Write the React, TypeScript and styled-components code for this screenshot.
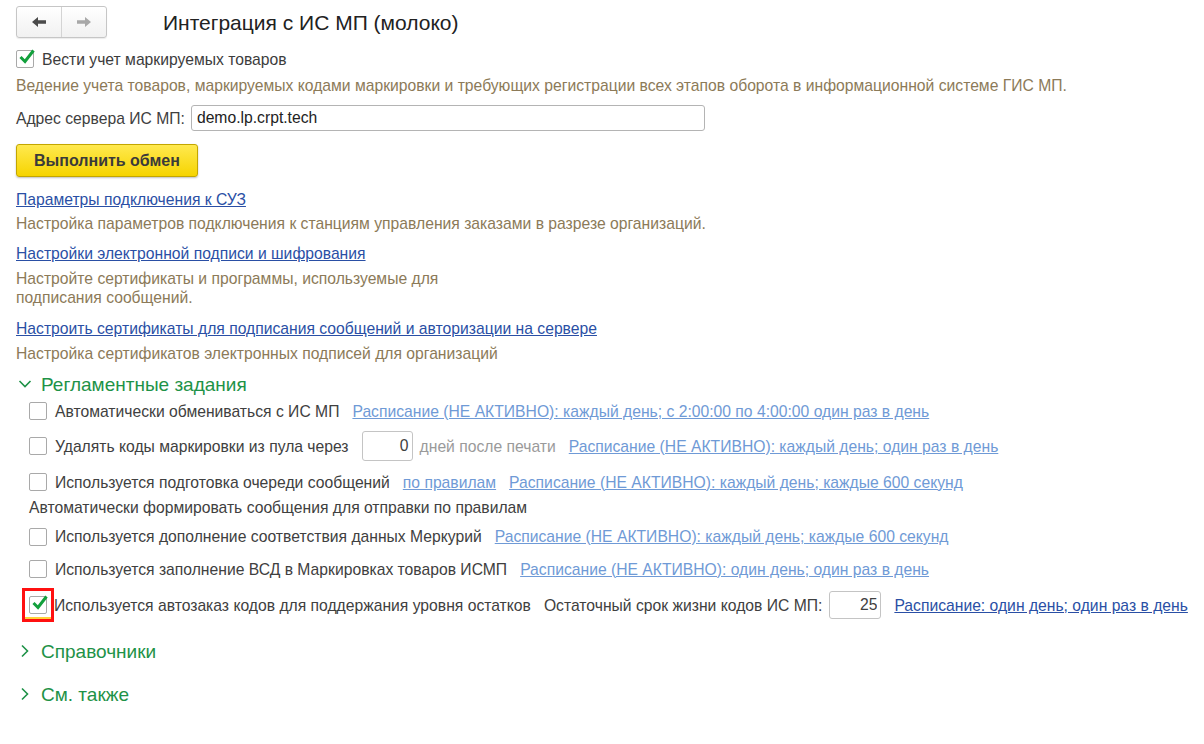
import React from "react";
import styled, { createGlobalStyle } from "styled-components";

const GlobalStyle = createGlobalStyle`
    html, body {
        margin: 0;
        padding: 0;
        background: #ffffff;
    }
    body {
        font-family: "Liberation Sans", Arial, sans-serif;
        font-size: 15.7px;
        color: #404040;
    }
`;

function BackArrow({ color }: { color: string }) {
    return (
        <svg width="16" height="12" viewBox="0 0 16 12">
            <path d="M1 6 L7 1 L7 4.2 L15 4.2 L15 7.8 L7 7.8 L7 11 Z" fill={color} />
        </svg>
    );
}

function ForwardArrow({ color }: { color: string }) {
    return (
        <svg width="16" height="12" viewBox="0 0 16 12">
            <path d="M15 6 L9 1 L9 4.2 L1 4.2 L1 7.8 L9 7.8 L9 11 Z" fill={color} />
        </svg>
    );
}

function Chevron({ open }: { open?: boolean }) {
    return (
        <svg width="14" height="14" viewBox="0 0 14 14">
            {open ? (
                <polyline points="1.5,4 7,9.5 12.5,4" fill="none" stroke="#1e9247" strokeWidth="1.6" />
            ) : (
                <polyline points="4,1.5 9.5,7 4,12.5" fill="none" stroke="#1e9247" strokeWidth="1.6" />
            )}
        </svg>
    );
}

function Check({ checked }: { checked?: boolean }) {
    return (
        <CheckBox>
            {checked && (
                <svg width="20" height="18" viewBox="0 0 20 18" style={{ position: "absolute", left: 0, top: -3 }}>
                    <polyline points="3.5,9 8,13.5 16.5,2.5" fill="none" stroke="#12a03c" strokeWidth="3" />
                </svg>
            )}
        </CheckBox>
    );
}

function App() {
    return (
        <Page>
            <GlobalStyle />
            <Header>
                <NavGroup>
                    <NavBtn><BackArrow color="#4a4a4a" /></NavBtn>
                    <NavBtn $last><ForwardArrow color="#a8a8a8" /></NavBtn>
                </NavGroup>
                <Title>Интеграция с ИС МП (молоко)</Title>
            </Header>

            <CheckRow>
                <Check checked />
                <span>Вести учет маркируемых товаров</span>
            </CheckRow>
            <Note $top={7}>
                Ведение учета товаров, маркируемых кодами маркировки и требующих регистрации всех этапов оборота в информационной системе ГИС МП.
            </Note>

            <FieldRow>
                <span>Адрес сервера ИС МП:</span>
                <TextInput defaultValue="demo.lp.crpt.tech" />
            </FieldRow>

            <YellowBtn>Выполнить обмен</YellowBtn>

            <Link $top={13}>Параметры подключения к СУЗ</Link>
            <Note $top={5}>Настройка параметров подключения к станциям управления заказами в разрезе организаций.</Note>

            <Link $top={11}>Настройки электронной подписи и шифрования</Link>
            <Note $top={6} $width={440}>
                Настройте сертификаты и программы, используемые для подписания сообщений.
            </Note>

            <Link $top={12}>Настроить сертификаты для подписания сообщений и авторизации на сервере</Link>
            <Note $top={6}>Настройка сертификатов электронных подписей для организаций</Note>

            <GroupHeader $top={9}>
                <Chevron open />
                <span>Регламентные задания</span>
            </GroupHeader>

            <Group>
                <TaskRow $h={32}>
                    <Check />
                    <span>Автоматически обмениваться с ИС МП</span>
                    <Link $inactive>Расписание (НЕ АКТИВНО): каждый день; с 2:00:00 по 4:00:00 один раз в день</Link>
                </TaskRow>
                <TaskRow $h={38}>
                    <Check />
                    <span>Удалять коды маркировки из пула через</span>
                    <SmallGroup>
                        <NumInput $w={51} $h={30} defaultValue="0" />
                        <Muted>дней после печати</Muted>
                    </SmallGroup>
                    <Link $inactive>Расписание (НЕ АКТИВНО): каждый день; один раз в день</Link>
                </TaskRow>
                <TaskRow $h={34}>
                    <Check />
                    <span>Используется подготовка очереди сообщений</span>
                    <Link $inactive>по правилам</Link>
                    <Link $inactive>Расписание (НЕ АКТИВНО): каждый день; каждые 600 секунд</Link>
                </TaskRow>
                <PlainRow>Автоматически формировать сообщения для отправки по правилам</PlainRow>
                <TaskRow $h={33}>
                    <Check />
                    <span>Используется дополнение соответствия данных Меркурий</span>
                    <Link $inactive>Расписание (НЕ АКТИВНО): каждый день; каждые 600 секунд</Link>
                </TaskRow>
                <TaskRow $h={32}>
                    <Check />
                    <span>Используется заполнение ВСД в Маркировках товаров ИСМП</span>
                    <Link $inactive>Расписание (НЕ АКТИВНО): один день; один раз в день</Link>
                </TaskRow>
                <TaskRow $h={40} $tight>
                    <Highlight>
                        <Check checked />
                    </Highlight>
                    <span>Используется автозаказ кодов для поддержания уровня остатков</span>
                    <SmallGroup>
                        <span>Остаточный срок жизни кодов ИС МП:</span>
                        <NumInput $w={52} $h={28} defaultValue="25" />
                    </SmallGroup>
                    <Link>Расписание: один день; один раз в день</Link>
                </TaskRow>
            </Group>

            <GroupHeader $top={14}>
                <Chevron />
                <span>Справочники</span>
            </GroupHeader>
            <GroupHeader $top={19}>
                <Chevron />
                <span>См. также</span>
            </GroupHeader>
        </Page>
    );
}

// PAGE
const Page = styled.div`
    display: flex;
    flex-direction: column;
    align-items: flex-start;
    padding: 6px 16px 20px 16px;
    line-height: 19px;
`;

const Header = styled.div`
    display: flex;
    align-items: center;
    height: 32px;
`;

const NavGroup = styled.div`
    display: flex;
    width: 91px;
    height: 32px;
    box-sizing: border-box;
    border: 1px solid #c6c6c6;
    border-radius: 3px;
    background: linear-gradient(#ffffff, #f1f1f1);
    box-shadow: 0 1px 1px rgba(0, 0, 0, 0.08);
`;

const NavBtn = styled.div<{ $last?: boolean }>`
    flex: 1;
    display: flex;
    align-items: center;
    justify-content: center;
    border-left: ${(p) => (p.$last ? "1px solid #d4d4d4" : "none")};
`;

const Title = styled.div`
    margin-left: 56px;
    font-size: 21px;
    color: #222;
    margin-top: 1px;
`;

const CheckRow = styled.div`
    display: flex;
    align-items: center;
    gap: 8px;
    margin-top: 11px;
    height: 20px;
    color: #3c3c3c;
`;

const CheckBox = styled.div`
    position: relative;
    width: 18px;
    height: 18px;
    box-sizing: border-box;
    border: 1px solid #a9a9a9;
    border-radius: 2px;
    background: #fff;
    flex-shrink: 0;
`;

const Note = styled.div<{ $top?: number; $width?: number }>`
    margin-top: ${(p) => p.$top ?? 0}px;
    color: #8c7a58;
    max-width: ${(p) => (p.$width ? `${p.$width}px` : "none")};
`;

const FieldRow = styled.div`
    display: flex;
    align-items: center;
    gap: 6px;
    margin-top: 10px;
    color: #404040;
`;

const TextInput = styled.input`
    width: 514px;
    height: 26px;
    box-sizing: border-box;
    border: 1px solid #b4b4b4;
    border-radius: 3px;
    padding: 0 5px;
    font-family: "Liberation Sans", Arial, sans-serif;
    font-size: 15.7px;
    color: #222;
    outline: none;
`;

const YellowBtn = styled.div`
    margin-top: 13px;
    width: 182px;
    height: 33px;
    box-sizing: border-box;
    display: flex;
    align-items: center;
    justify-content: center;
    background: linear-gradient(#ffe94f, #f6d400);
    border: 1px solid #c3a600;
    border-radius: 3px;
    box-shadow: 0 1px 2px rgba(0, 0, 0, 0.25);
    font-weight: bold;
    font-size: 16px;
    color: #3a3a3a;
`;

const Link = styled.span<{ $top?: number; $inactive?: boolean }>`
    margin-top: ${(p) => p.$top ?? 0}px;
    color: ${(p) => (p.$inactive ? "#6f9ad6" : "#2a4fa5")};
    text-decoration: underline;
    white-space: nowrap;
`;

const GroupHeader = styled.div<{ $top?: number }>`
    display: flex;
    align-items: center;
    gap: 9px;
    margin-top: ${(p) => p.$top ?? 0}px;
    margin-left: 2px;
    height: 24px;
    font-size: 19px;
    color: #1e9247;
`;

const Group = styled.div`
    display: flex;
    flex-direction: column;
    padding-left: 13px;
    margin-top: -1px;
`;

const TaskRow = styled.div<{ $h: number; $tight?: boolean }>`
    display: flex;
    align-items: center;
    gap: 13px;
    height: ${(p) => p.$h}px;
    white-space: nowrap;
    color: #404040;

    & > :first-child {
        margin-right: ${(p) => (p.$tight ? "-13px" : "-5px")};
    }
`;

const Highlight = styled.div`
    display: flex;
    align-items: center;
    justify-content: center;
    width: 32px;
    height: 34px;
    margin-left: -7px;
    box-sizing: border-box;
    border: 3px solid #ff1010;
    box-shadow: inset 0 -2px 0 #ffd23a;
    background: #fff;
`;

const SmallGroup = styled.div`
    display: flex;
    align-items: center;
    gap: 7px;
`;

const NumInput = styled.input<{ $w: number; $h: number }>`
    width: ${(p) => p.$w}px;
    height: ${(p) => p.$h}px;
    box-sizing: border-box;
    border: 1px solid #c4c4c4;
    border-radius: 3px;
    padding: 0 3px;
    text-align: right;
    font-family: "Liberation Sans", Arial, sans-serif;
    font-size: 15.7px;
    color: #404040;
    outline: none;
`;

const Muted = styled.span`
    color: #9a9a9a;
`;

const PlainRow = styled.div`
    height: 18px;
    line-height: 18px;
    color: #404040;
    margin-bottom: 3px;
`;

export default App;
